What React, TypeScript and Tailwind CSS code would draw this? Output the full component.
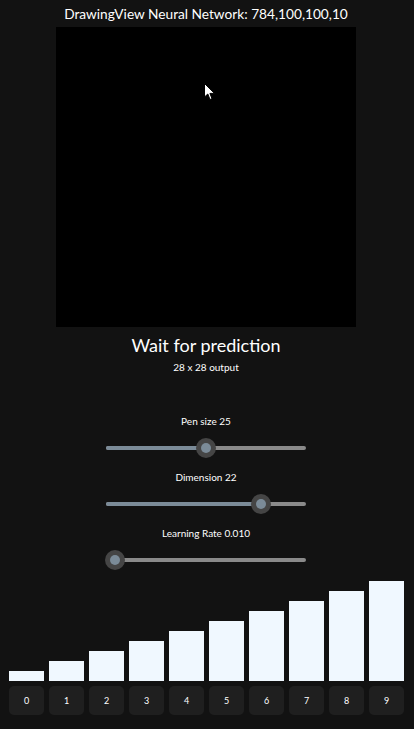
import { useState } from "react";

const Slider = ({ label, pos }: { label: string; pos: number }) => {
    // pos is thumb center in px along a 200px track
    return (
        <div className="flex flex-col items-center">
            <div className="text-[10px] leading-[14px] text-white">{label}</div>
            <div className="relative mt-[10px] h-[20px] w-[200px]">
                <div className="absolute left-0 right-0 top-[8px] h-[4px] rounded-full bg-[#8a8a8a]" />
                <div
                    className="absolute left-0 top-[8px] h-[4px] rounded-full bg-[#7b8b98]"
                    style={{ width: pos }}
                />
                <div
                    className="absolute top-0 flex h-[20px] w-[20px] items-center justify-center rounded-full bg-[#454545]"
                    style={{ left: pos - 10 }}
                >
                    <div className="h-[10px] w-[10px] rounded-full bg-[#7b8b98]" />
                </div>
            </div>
        </div>
    );
};

export default function App() {
    const [digits] = useState([0, 1, 2, 3, 4, 5, 6, 7, 8, 9]);

    return (
        <div
            className="flex h-[729px] w-[414px] flex-col bg-[#121212] text-white"
            style={{ fontFamily: 'Lato, "Open Sans", sans-serif' }}
        >
            <div className="flex w-[412px] flex-1 flex-col items-center">
                <div className="mt-[4px] text-[13.7px] leading-[19px]">DrawingView Neural Network: 784,100,100,10</div>

                {/* Drawing canvas */}
                <div className="relative mt-[4px] h-[300px] w-[300px] bg-black">
                    <svg className="absolute left-[148px] top-[56px]" width="12" height="19" viewBox="0 0 12 19">
                        <path d="M0.5 0.5 L0.5 14 L3.8 11 L6 16.5 L8 15.7 L5.9 10.4 L10.5 10.4 Z" fill="#fff" stroke="#000" strokeWidth="1" />
                    </svg>
                </div>

                <div className="mt-[5px] text-[18px] leading-[26px]">Wait for prediction</div>
                <div className="mt-[2px] text-[10px] leading-[14px]">28 x 28 output</div>

                <div className="mt-[40px] flex flex-col gap-[12px]">
                    <Slider label="Pen size 25" pos={100} />
                    <Slider label="Dimension 22" pos={155} />
                    <Slider label="Learning Rate 0.010" pos={9} />
                </div>
            </div>

            {/* Output bars */}
            <div className="flex gap-[5px] px-[9px] pb-[14px]">
                {digits.map((d) => (
                    <div key={d} className="flex w-[35px] flex-col items-stretch">
                        <div className="flex h-[110px] items-end">
                            <div className="w-full bg-[#f0f8ff]" style={{ height: (d + 1) * 10 }} />
                        </div>
                        <div className="mt-[5px] flex h-[29px] items-center justify-center rounded-[5px] bg-[#1f1f1f] text-[9px]">
                            {d}
                        </div>
                    </div>
                ))}
            </div>
        </div>
    );
}
